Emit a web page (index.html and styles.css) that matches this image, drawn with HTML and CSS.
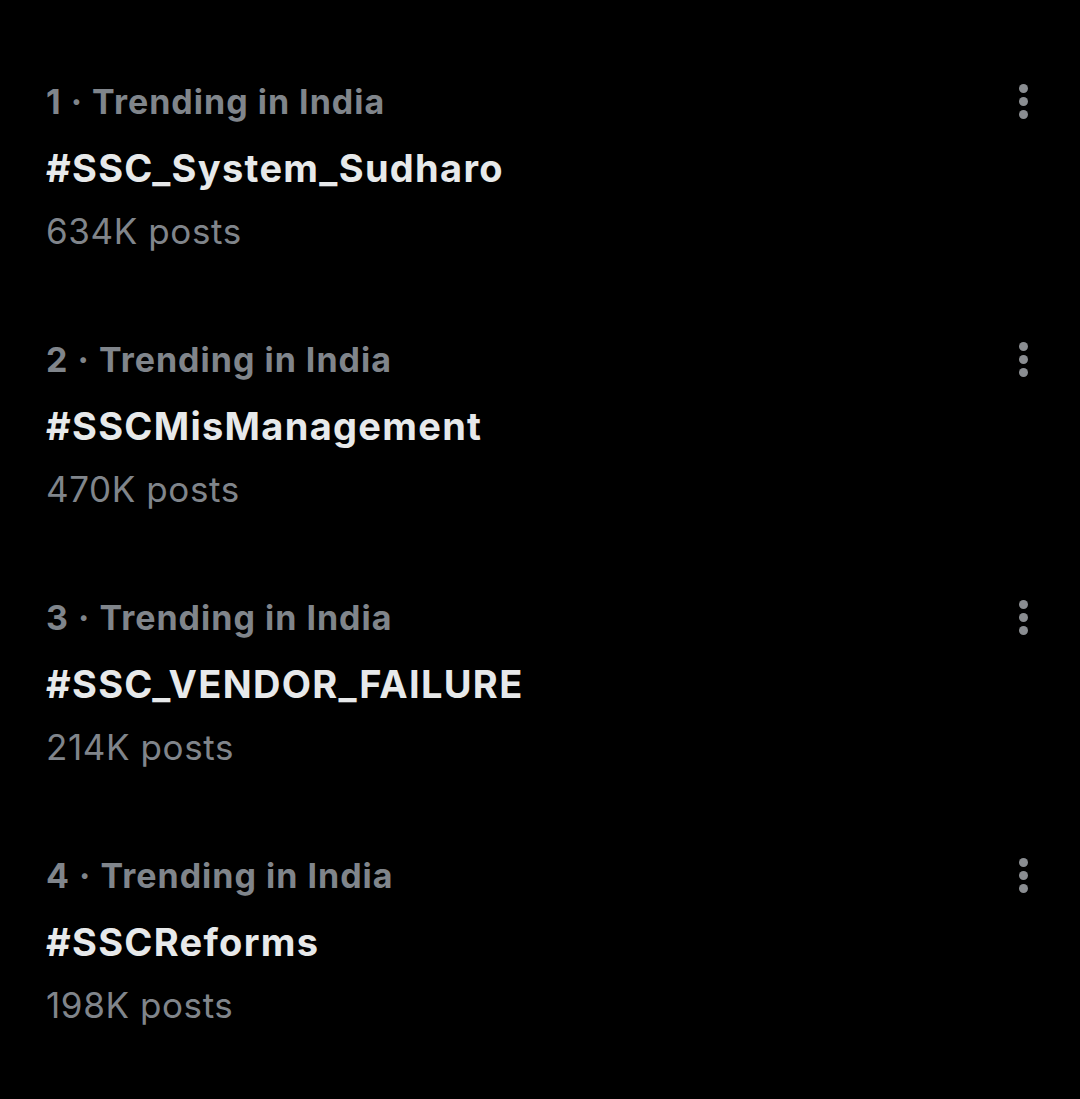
FILE: index.html
```html
<!DOCTYPE html>
<html>
<head>
<meta charset="utf-8">
<link rel="stylesheet" href="styles.css">
</head>
<body>
<div class="list">
  <div class="trend">
    <div class="text">
      <div class="meta">1 · Trending in India</div>
      <div class="title">#SSC_System_Sudharo</div>
      <div class="count">634K posts</div>
    </div>
    <div class="more"><span></span><span></span><span></span></div>
  </div>
  <div class="trend">
    <div class="text">
      <div class="meta">2 · Trending in India</div>
      <div class="title">#SSCMisManagement</div>
      <div class="count">470K posts</div>
    </div>
    <div class="more"><span></span><span></span><span></span></div>
  </div>
  <div class="trend">
    <div class="text">
      <div class="meta">3 · Trending in India</div>
      <div class="title">#SSC_VENDOR_FAILURE</div>
      <div class="count">214K posts</div>
    </div>
    <div class="more"><span></span><span></span><span></span></div>
  </div>
  <div class="trend">
    <div class="text">
      <div class="meta">4 · Trending in India</div>
      <div class="title">#SSCReforms</div>
      <div class="count">198K posts</div>
    </div>
    <div class="more"><span></span><span></span><span></span></div>
  </div>
</div>
</body>
</html>
```
FILE: styles.css
```css
html, body {
  margin: 0;
  padding: 0;
  background: #000;
  height: 100%;
}
body {
  font-family: Inter, "Noto Sans", sans-serif;
  -webkit-font-smoothing: antialiased;
}
.list {
  display: flex;
  flex-direction: column;
  padding-top: 78px;
}
.trend {
  display: flex;
  justify-content: space-between;
  align-items: flex-start;
  padding: 0 46px 0 46px;
  height: 258px;
}
.text {
  display: flex;
  flex-direction: column;
}
.meta {
  color: #80858b;
  font-size: 34px;
  font-weight: 700;
  letter-spacing: 1px;
  line-height: 48px;
  height: 48px;
}
.title {
  color: #e7e9ea;
  font-size: 38px;
  font-weight: 700;
  letter-spacing: 1.3px;
  line-height: 48px;
  margin-top: 18px;
}
.count {
  color: #80858b;
  font-size: 35px;
  font-weight: 400;
  letter-spacing: 0.6px;
  line-height: 48px;
  margin-top: 15px;
}
.more {
  display: flex;
  flex-direction: column;
  gap: 4px;
  margin-top: 6px;
  margin-right: 6px;
}
.more span {
  display: block;
  width: 9px;
  height: 9px;
  border-radius: 50%;
  background: #8a8d91;
}
```
